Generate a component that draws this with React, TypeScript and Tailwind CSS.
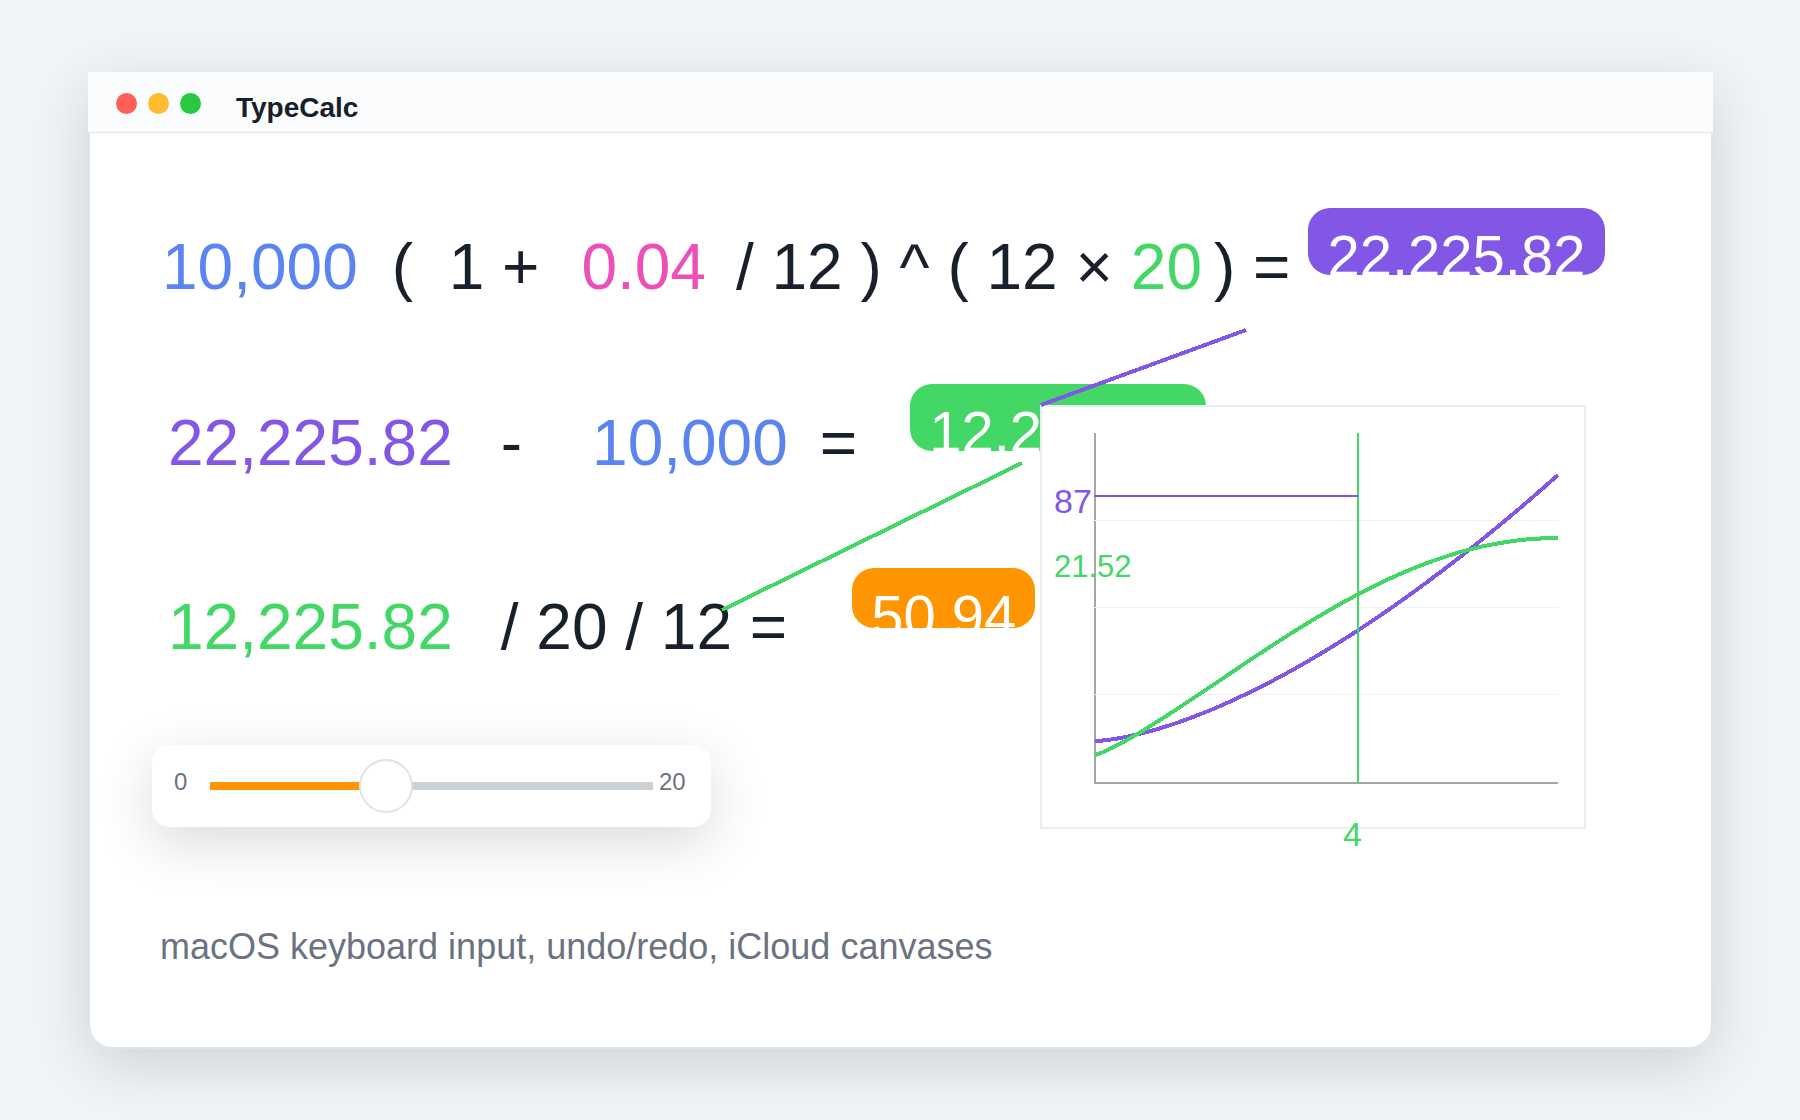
import { useState } from "react";
import type { CSSProperties, ReactNode } from "react";
import clsx from "clsx";

interface Token {
  text: string;
  className: string;
}

interface Formula {
  id: string;
  tokens: Token[];
  result: string;
  resultClass: string;
  rowClass: string;
}

const BLUE = "text-[#5b84f3]";
const PINK = "text-[#ec4fb7]";
const PURPLE = "text-[#8257e5]";
const GREEN = "text-[#43d765]";

const formulas: Formula[] = [
  {
    id: "compound",
    rowClass: "ml-2.5",
    tokens: [
      { text: "10,000", className: BLUE },
      { text: "(  1 +", className: "ml-[34px]" },
      { text: "0.04", className: `ml-[42px] ${PINK}` },
      { text: "/ 12 ) ^ ( 12 ×", className: "ml-[30px]" },
      { text: "20", className: `ml-[18px] ${GREEN}` },
      { text: ") =", className: "ml-3" },
    ],
    result: "22,225.82",
    resultClass: "ml-[18px] h-[67px] bg-[#8257e5]",
  },
  {
    id: "interest",
    rowClass: "ml-4 mt-[57px]",
    tokens: [
      { text: "22,225.82", className: PURPLE },
      { text: "-", className: "ml-12" },
      { text: "10,000", className: `ml-[70px] ${BLUE}` },
      { text: "=", className: "ml-8" },
    ],
    result: "12,225.82",
    resultClass: "ml-[53px] h-[67px] bg-[#43d765]",
  },
  {
    id: "monthly",
    rowClass: "ml-4 mt-[65px]",
    tokens: [
      { text: "12,225.82", className: GREEN },
      { text: "/ 20 / 12 =", className: "ml-12" },
    ],
    result: "50.94",
    resultClass: "ml-[65px] h-[60px] bg-[#ff9500]",
  },
];

function TitleBar() {
  return (
    <header className="flex h-[61px] items-start border-b border-[#dfe5ea] bg-[#fbfcfe] pl-7 pt-[21px]">
      <div className="flex gap-[11px]">
        <button aria-label="Close" className="size-[21px] rounded-full bg-[#ff5f57]" />
        <button aria-label="Minimize" className="size-[21px] rounded-full bg-[#febc2e]" />
        <button aria-label="Zoom" className="size-[21px] rounded-full bg-[#28c840]" />
      </div>
      <h1 className="ml-[35px] text-[28px] font-bold leading-[30px]">TypeCalc</h1>
    </header>
  );
}

function FormulaRow({ formula }: { formula: Formula }) {
  return (
    <div className={clsx("flex items-start whitespace-pre text-[64px] leading-[119px]", formula.rowClass)}>
      {formula.tokens.map((t, i) => (
        <span key={i} className={t.className}>
          {t.text}
        </span>
      ))}
      <output
        className={clsx(
          "block overflow-hidden rounded-[22px] px-[19px] text-[58px] leading-[96px] text-white",
          formula.resultClass
        )}
      >
        {formula.result}
      </output>
    </div>
  );
}

function ValueSlider() {
  const [value, setValue] = useState(7.68);
  const style = { "--fill": `${(value / 20) * 100}%` } as CSSProperties;

  return (
    <div className="mt-[58px] flex h-[82px] w-[559px] items-start rounded-[18px] bg-white px-[22px] pt-[13px] text-2xl leading-[48px] text-[#6b7280] shadow-[0_16px_56px_rgba(0,0,0,0.15)]">
      <label htmlFor="years" className="w-9">
        0
      </label>
      <input
        id="years"
        type="range"
        min={0}
        max={20}
        step={0.01}
        value={value}
        onChange={(e) => setValue(Number(e.target.value))}
        style={style}
        className="h-14 w-[443px] appearance-none bg-transparent [&::-webkit-slider-runnable-track]:h-2 [&::-webkit-slider-runnable-track]:bg-[linear-gradient(to_right,#ff9500_var(--fill),#ccd1d6_var(--fill))] [&::-webkit-slider-thumb]:-mt-[23px] [&::-webkit-slider-thumb]:size-[54px] [&::-webkit-slider-thumb]:appearance-none [&::-webkit-slider-thumb]:rounded-full [&::-webkit-slider-thumb]:border-2 [&::-webkit-slider-thumb]:border-[#dfe3e8] [&::-webkit-slider-thumb]:bg-white"
      />
      <span className="ml-1.5">20</span>
    </div>
  );
}

// plot area inside the chart card
const PLOT = { left: 53, right: 516, top: 26, bottom: 376 };

function curve(fn: (t: number) => number) {
  const points: string[] = [];
  for (let i = 0; i <= 60; i++) {
    const t = i / 60;
    const x = PLOT.left + t * (PLOT.right - PLOT.left);
    const y = PLOT.bottom - fn(t) * (PLOT.bottom - PLOT.top);
    points.push(`${x.toFixed(1)},${y.toFixed(1)}`);
  }
  return points.join(" ");
}

const balanceCurve = curve((t) => 0.12 + 0.76 * Math.pow(t, 1.55));
const rateCurve = curve((t) => 0.08 + 0.62 * Math.pow(Math.sin((t * Math.PI) / 2), 1.2));

function Chart() {
  return (
    <div className="absolute left-[950px] top-[272px] h-[424px] w-[546px] border-2 border-[#e9eef2] bg-white">
      <svg viewBox="0 0 542 420" className="size-full overflow-visible" fill="none" shapeRendering="crispEdges">
        <path d="M53 26V376M52 376H516" stroke="#a3a6aa" strokeWidth="2" />
        <path d="M52 113.5H516M52 200.5H516M52 287.5H516" stroke="#f0f2f4" />
        <polyline points={balanceCurve} stroke="#8257e5" strokeWidth="4" />
        <polyline points={rateCurve} stroke="#43d765" strokeWidth="4" />
        <path d="M316 26V376" stroke="#43d765" strokeWidth="2" />
        <path d="M52 89H316" stroke="#8257e5" strokeWidth="2" />
        <text x="12" y="106" className="fill-[#8257e5] text-[34px]">87</text>
        <text x="12" y="170" className="fill-[#43d765] text-[31px]">21.52</text>
        <text x="301" y="439" className="fill-[#43d765] text-[34px]">4</text>
      </svg>
    </div>
  );
}

// lines that tie a result to the place where it is used
function Connectors() {
  return (
    <svg
      className="pointer-events-none absolute left-0 top-0 h-[700px] w-[1500px]"
      viewBox="0 0 1500 700"
      fill="none"
      strokeWidth="4"
      shapeRendering="crispEdges"
    >
      <path d="M951 272L1156 197" stroke="#8257e5" />
      <path d="M632 477L932 330" stroke="#43d765" />
    </svg>
  );
}

function Canvas({ children }: { children: ReactNode }) {
  return (
    <main className="relative flex-1 rounded-b-3xl border-x-2 border-b-2 border-[#dfe4ea] bg-white pb-20 pl-[62px] pt-[75px]">
      {children}
    </main>
  );
}

export default function App() {
  return (
    <div className="flex min-h-screen flex-col bg-[#f1f5f8] pb-[71px] pl-[88px] pr-[87px] pt-[72px] font-['Liberation_Sans',Arial,sans-serif] text-[#17202b]">
      <div className="flex flex-1 flex-col rounded-b-3xl shadow-[0_16px_64px_rgba(0,0,0,0.15)]">
        <TitleBar />
        <Canvas>
          {formulas.map((f) => (
            <FormulaRow key={f.id} formula={f} />
          ))}
          <ValueSlider />
          <p className="ml-2 mt-[100px] text-4xl leading-10 text-[#6b7280]">
            macOS keyboard input, undo/redo, iCloud canvases
          </p>
          <Chart />
          <Connectors />
        </Canvas>
      </div>
    </div>
  );
}
